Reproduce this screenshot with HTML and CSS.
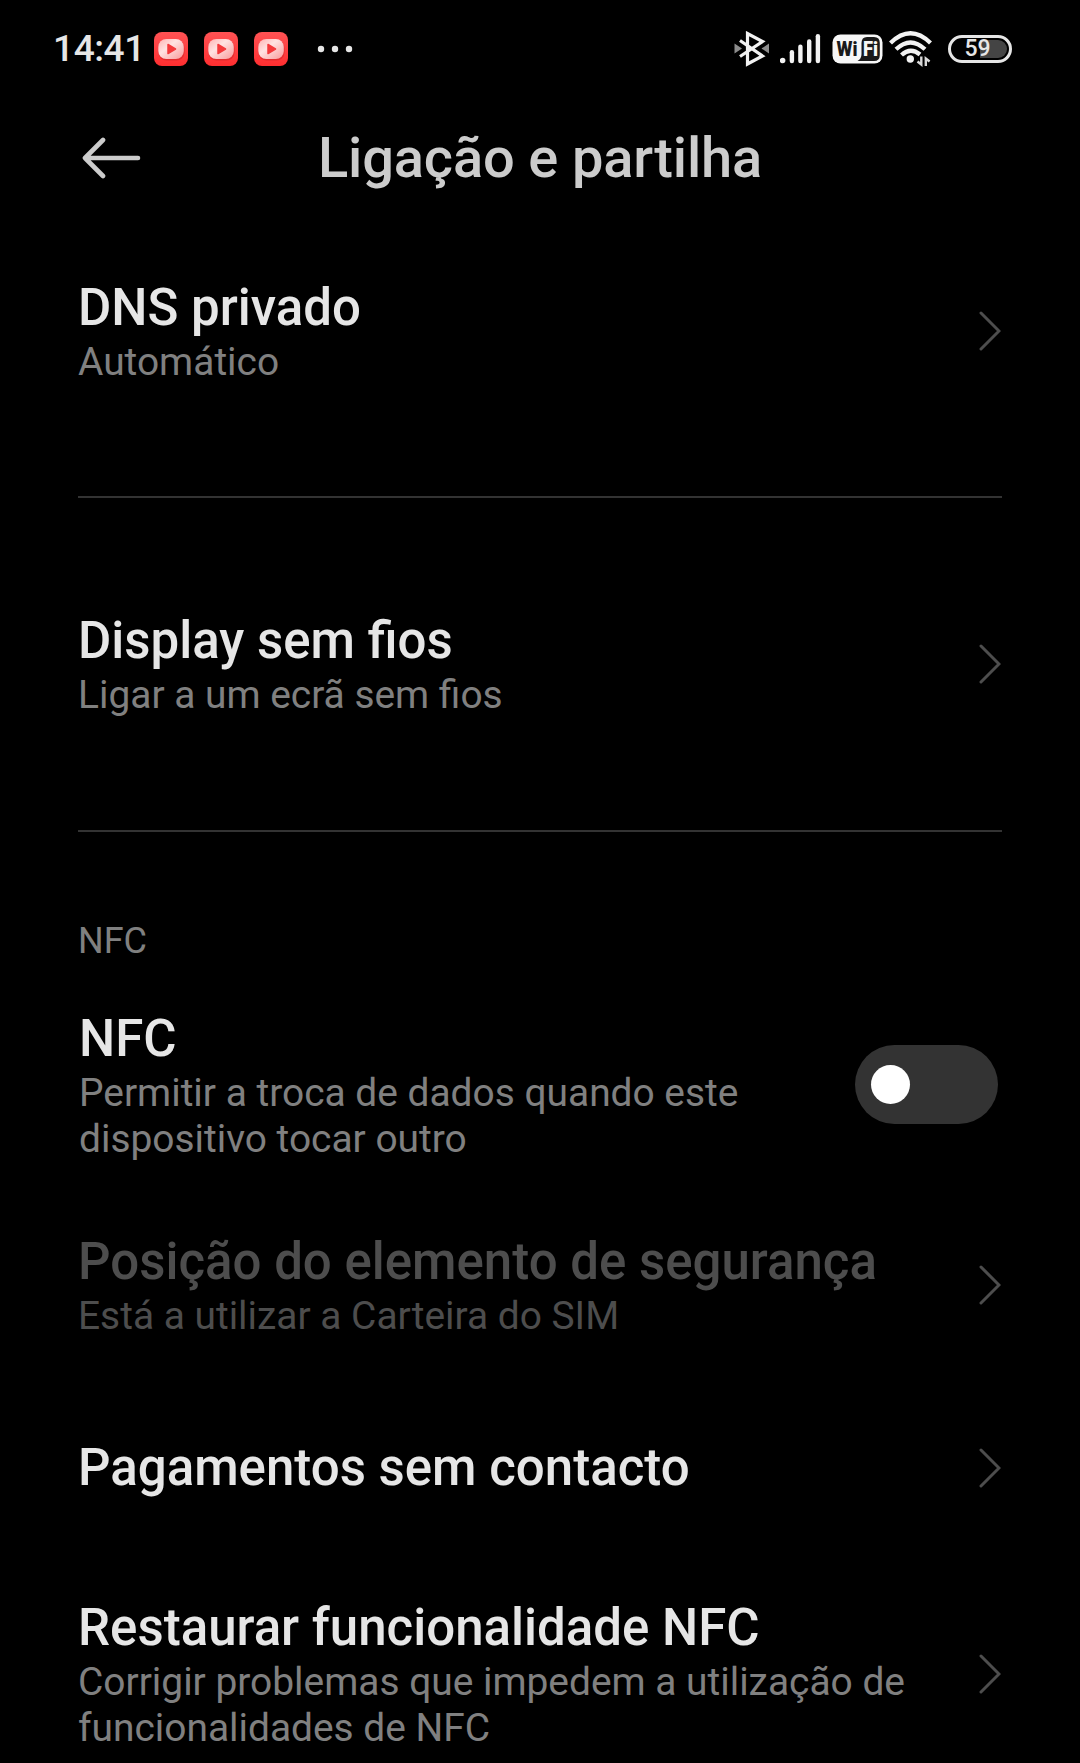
FILE: index.html
```html
<!DOCTYPE html>
<html lang="pt">
  <head>
    <meta charset="UTF-8" />
    <meta name="viewport" content="width=device-width, initial-scale=1.0" />
    <title>Ligação e partilha</title>
    <link rel="stylesheet" href="styles.css">
  </head>
  <body>
    <!-- Shared icons -->
    <svg class="defs" width="0" height="0">
      <defs>
        <linearGradient id="appRed" x1="0" y1="0" x2="0" y2="1">
          <stop offset="0" stop-color="#ff5254" />
          <stop offset="1" stop-color="#ff2e30" />
        </linearGradient>
        <linearGradient id="appScreen" x1="0" y1="0" x2="1" y2="1">
          <stop offset="0" stop-color="#ffb3b3" />
          <stop offset="0.4" stop-color="#ffe2e2" />
          <stop offset="1" stop-color="#f99a9a" />
        </linearGradient>
      </defs>
      <symbol id="app" viewBox="0 0 34 34">
        <rect width="34" height="34" rx="8" fill="url(#appRed)" />
        <rect x="4.5" y="8" width="26" height="20.5" rx="8" fill="#d9282b" opacity="0.7" />
        <rect x="4.3" y="7" width="25.5" height="20" rx="8" fill="url(#appScreen)" />
        <path d="M14 12.5 L21.5 17 L14 21.5 Z" fill="#f5383b" stroke="#f5383b" stroke-width="1.5" stroke-linejoin="round" />
      </symbol>
      <symbol id="chevron" viewBox="0 0 22 42">
        <path d="M2 3 L20 21 L2 39" fill="none" stroke="#4d4d4d" stroke-width="3" stroke-linecap="round" stroke-linejoin="miter" />
      </symbol>
    </svg>

    <div class="screen">
      <!-- Status bar -->
      <div class="status-bar">
        <span class="time">14:41</span>
        <div class="notifications">
          <svg width="34" height="34"><use href="#app" /></svg>
          <svg width="34" height="34"><use href="#app" /></svg>
          <svg width="34" height="34"><use href="#app" /></svg>
        </div>
        <svg class="more" width="36" height="8" viewBox="0 0 36 8" fill="#e6e6e6">
          <circle cx="4" cy="4" r="3.2" />
          <circle cx="18" cy="4" r="3.2" />
          <circle cx="32" cy="4" r="3.2" />
        </svg>
        <div class="system-icons">
          <svg class="bluetooth" width="36" height="36" viewBox="0 0 36 36">
            <path d="M0.5 12.5 L8 17.5 L0.5 22.5 Z M35 12.5 L27.5 17.5 L35 22.5 Z" fill="#8c8c8c" />
            <path d="M6 9.5 L28.5 25 L13.5 33 L13.5 2.5 L28.5 10.5 L6 25.5" fill="none" stroke="#f2f2f2" stroke-width="3.2" />
          </svg>
          <svg class="signal" width="41" height="30" viewBox="0 0 41 30" fill="#f2f2f2">
            <circle cx="2.6" cy="26.5" r="2.8" />
            <rect x="9.7" y="16" width="4.4" height="13.3" rx="2.2" />
            <rect x="18.2" y="10.5" width="4.4" height="18.8" rx="2.2" />
            <rect x="27" y="5.3" width="4.4" height="24" rx="2.2" />
            <rect x="35.7" y="0" width="4.4" height="29.3" rx="2.2" />
          </svg>
          <svg class="wifi-badge" width="51" height="30" viewBox="0 0 51 30">
            <rect x="0.5" y="0.5" width="50" height="29" rx="8" fill="#f7f7f7" />
            <path d="M35 3 H42 Q47.8 3 47.8 9 V21 Q47.8 27 42 27 H25.5 Q29.5 25 29.5 20 V9 Q29.5 3 35 3 Z" fill="#1a1a1a" />
            <text class="badge-text" x="4.5" y="22" textLength="21" lengthAdjust="spacingAndGlyphs" fill="#1a1a1a">Wi</text>
            <text class="badge-text" x="31" y="22" textLength="15" lengthAdjust="spacingAndGlyphs" fill="#f7f7f7">Fi</text>
          </svg>
          <svg class="wifi" width="44" height="36" viewBox="0 0 44 36">
            <g fill="none" stroke="#f2f2f2" stroke-width="4.3">
              <path d="M1.5 12 Q21.5 -7.4 41.5 12" />
              <path d="M7 18.3 Q21.5 4.6 36 18.3" />
              <path d="M12.5 24 Q21.5 15.6 31 23.5" />
            </g>
            <circle cx="21.3" cy="28" r="3.7" fill="#f2f2f2" />
            <path d="M28.5 30.5 L32.3 33.5 V25.5 M36.8 35 V27.5 L40.6 30.5" fill="none" stroke="#d9d9d9" stroke-width="2.4" />
          </svg>
          <div class="battery"><span class="battery-level">59</span></div>
        </div>
      </div>

      <!-- Header -->
      <header class="header">
        <svg class="back" width="60" height="42" viewBox="0 0 60 42">
          <path d="M21 3 L3 21 L21 39 M3 21 H56" fill="none" stroke="#ccc" stroke-width="4.6" stroke-linecap="round" stroke-linejoin="round" />
        </svg>
        <h1>Ligação e partilha</h1>
      </header>

      <!-- Settings list -->
      <main class="settings">
        <div class="item dns">
          <div class="text">
            <h2>DNS privado</h2>
            <p>Automático</p>
          </div>
          <svg class="chevron"><use href="#chevron" /></svg>
        </div>
        <hr>
        <div class="item display">
          <div class="text">
            <h2>Display sem fios</h2>
            <p>Ligar a um ecrã sem fios</p>
          </div>
          <svg class="chevron"><use href="#chevron" /></svg>
        </div>
        <hr>

        <h3>NFC</h3>
        <div class="item nfc">
          <div class="text">
            <h2>NFC</h2>
            <p>Permitir a troca de dados quando este<br>dispositivo tocar outro</p>
          </div>
          <div class="switch"><span class="knob"></span></div>
        </div>
        <div class="item secure disabled">
          <div class="text">
            <h2>Posição do elemento de segurança</h2>
            <p>Está a utilizar a Carteira do SIM</p>
          </div>
          <svg class="chevron"><use href="#chevron" /></svg>
        </div>
        <div class="item payments">
          <div class="text">
            <h2>Pagamentos sem contacto</h2>
          </div>
          <svg class="chevron"><use href="#chevron" /></svg>
        </div>
        <div class="item restore">
          <div class="text">
            <h2>Restaurar funcionalidade NFC</h2>
            <p>Corrigir problemas que impedem a utilização de<br>funcionalidades de NFC</p>
          </div>
          <svg class="chevron"><use href="#chevron" /></svg>
        </div>
      </main>
    </div>
  </body>
</html>
```
FILE: styles.css
```css
* {
  margin: 0;
  padding: 0;
  box-sizing: border-box;
}

body {
  background: #000;
  color: #e6e6e6;
  font-family: Roboto, sans-serif;
}

svg {
  display: block;
  flex-shrink: 0;
}

.defs {
  position: absolute;
}

.screen {
  width: 1080px;
  height: 1763px;
  overflow: hidden;
}

/* Status bar */
.status-bar {
  display: flex;
  align-items: center;
  height: 98px;
  padding: 0 68px 0 53px;
}

.time {
  width: 101px;
  font-size: 37px;
  font-weight: 500;
  letter-spacing: -0.4px;
  line-height: 44px;
}

.notifications {
  display: flex;
  gap: 16px;
}

.more {
  margin-left: 29px;
}

.system-icons {
  display: flex;
  align-items: center;
  margin-left: auto;
}

.signal {
  margin-left: 10px;
}

.wifi-badge {
  margin-left: 11px;
}

.badge-text {
  font-size: 20px;
  font-weight: 900;
}

.wifi {
  margin-left: 6px;
}

.battery {
  display: flex;
  align-items: center;
  justify-content: center;
  width: 64px;
  height: 28px;
  margin-left: 15px;
  padding: 2px;
  border: 3px solid #e6e6e6;
  border-radius: 14px;
  background: linear-gradient(to right, #000 50%, #444 50%) content-box;
}

.battery-level {
  margin-right: 5px;
  font-size: 23px;
  font-weight: 500;
  line-height: 24px;
}

/* Header */
.header {
  display: flex;
  align-items: center;
  height: 120px;
  padding-left: 82px;
}

h1 {
  margin-left: 176px;
  color: #ccc;
  font-size: 56px;
  font-weight: 500;
  letter-spacing: -0.15px;
  line-height: 66px;
}

/* Settings list */
.settings {
  padding: 0 78px;
}

.item {
  display: flex;
  align-items: center;
  justify-content: space-between;
}

h2 {
  font-size: 51px;
  font-weight: 500;
  line-height: 60px;
  white-space: nowrap;
}

p {
  margin-top: 1px;
  color: #808080;
  font-size: 38.9px;
  line-height: 46px;
  white-space: nowrap;
}

h3 {
  margin-top: 88px;
  color: #808080;
  font-size: 36px;
  font-weight: 400;
  line-height: 42px;
}

hr {
  height: 2px;
  border: none;
  background: #333;
}

.chevron {
  width: 22px;
  height: 42px;
  margin: 0 1px 1px 0;
}

.dns {
  padding: 60px 0 111px;
}

.display {
  padding: 113px 0 112px;
}

.nfc {
  margin-top: 47px;
  padding-left: 1px;
}

.secure {
  margin-top: 70px;
}

.payments {
  margin-top: 99px;
}

.restore {
  margin-top: 100px;
}

.disabled h2,
.disabled p {
  color: #4d4d4d;
}

/* Switch */
.switch {
  display: flex;
  align-items: center;
  width: 143px;
  height: 79px;
  margin-right: 4px;
  margin-bottom: 2px;
  padding-left: 16px;
  border-radius: 40px;
  background: #333;
}

.knob {
  width: 39px;
  height: 39px;
  border-radius: 50%;
  background: #fff;
}
```
